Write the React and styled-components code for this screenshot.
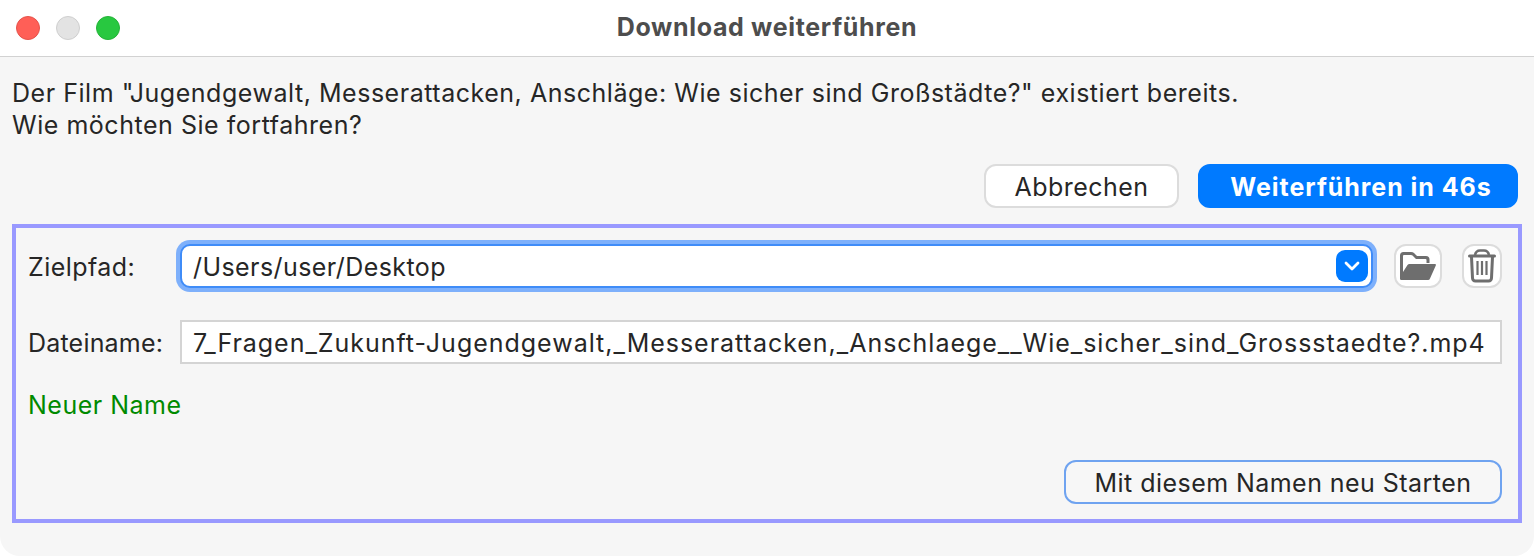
import React from "react";
import styled, { createGlobalStyle } from "styled-components";

const GlobalStyle = createGlobalStyle`
  html, body {
    margin: 0;
    padding: 0;
    background: #ffffff;
  }
  body {
    font-family: "Inter", "Liberation Sans", sans-serif;
    color: #262626;
  }
`;

const Window = styled.div`
  width: 1534px;
  height: 556px;
  display: flex;
  flex-direction: column;
  background: #f6f6f6;
  border-radius: 0 0 20px 20px;
  overflow: hidden;
`;

const TitleBar = styled.header`
  position: relative;
  height: 56px;
  flex: none;
  display: flex;
  align-items: center;
  justify-content: center;
  background: #ffffff;
  border-bottom: 1px solid #d2d2d2;
`;

const Lights = styled.div`
  position: absolute;
  left: 16px;
  top: 16px;
  display: flex;
  gap: 16px;
`;

const Light = styled.span`
  width: 24px;
  height: 24px;
  box-sizing: border-box;
  border-radius: 50%;
  background: ${(p) => p.$color};
  border: 1px solid ${(p) => p.$edge};
`;

const Title = styled.h1`
  margin: 0 0 2px;
  font-size: 25px;
  font-weight: 700;
  letter-spacing: 0.67px;
  color: #4d4d4d;
`;

const Body = styled.main`
  flex: 1;
  display: flex;
  flex-direction: column;
  padding: 20px 12px 0;
`;

const Message = styled.p`
  margin: 0;
  font-size: 25px;
  line-height: 32px;
  letter-spacing: 0.53px;
  color: #262626;
`;

const Actions = styled.div`
  display: flex;
  justify-content: flex-end;
  gap: 19px;
  margin-top: 23px;
  padding-right: 4px;
`;

const Button = styled.button`
  height: 44px;
  box-sizing: border-box;
  width: ${(p) => p.$width}px;
  padding: 2px 0 0;
  font-family: inherit;
  font-size: 25px;
  letter-spacing: 0.45px;
  border-radius: 12px;
  color: #262626;
  background: #ffffff;
  border: 2px solid #dcdcdc;
`;

const PrimaryButton = styled(Button)`
  padding-left: 6px;
  font-weight: 700;
  letter-spacing: 0.95px;
  color: #ffffff;
  background: #007aff;
  border-color: #007aff;
`;

const OutlineButton = styled(Button)`
  background: #f7f7f7;
  border-color: #6fa3f0;
`;

const Panel = styled.section`
  box-sizing: border-box;
  width: 1510px;
  height: 299px;
  margin-top: 16px;
  padding: 13px 16px 15px 12px;
  display: flex;
  flex-direction: column;
  border: 4px solid #9999ff;
`;

const Row = styled.div`
  display: flex;
  align-items: center;
  height: ${(p) => p.$height}px;
  margin-top: ${(p) => p.$top || 0}px;
`;

const Label = styled.label`
  width: 152px;
  flex: none;
  padding-top: 2px;
  font-size: 25px;
  letter-spacing: ${(p) => p.$spacing}px;
  color: #262626;
`;

const Select = styled.div`
  box-sizing: border-box;
  width: 1193px;
  height: 44px;
  display: flex;
  align-items: center;
  justify-content: space-between;
  padding: 0 3px 0 11px;
  background: #ffffff;
  border: 2px solid #3f8cf8;
  border-radius: 10px;
  box-shadow: 0 0 0 4px #7eb0fb;
  font-size: 25px;
  letter-spacing: 0.42px;
  color: #262626;
`;

const SelectValue = styled.span`
  padding-top: 2px;
`;

const SelectArrow = styled.span`
  width: 32px;
  height: 32px;
  display: flex;
  align-items: center;
  justify-content: center;
  border-radius: 9px;
  background: #007aff;
`;

const IconButton = styled.button`
  box-sizing: border-box;
  width: ${(p) => p.$width}px;
  height: 44px;
  margin-left: ${(p) => p.$left}px;
  padding: 0;
  display: flex;
  align-items: center;
  justify-content: center;
  background: #ffffff;
  border: 2px solid #dcdcdc;
  border-radius: 12px;
`;

const FileInput = styled.div`
  box-sizing: border-box;
  width: 1322px;
  height: 44px;
  display: flex;
  align-items: center;
  padding: 2px 0 0 11px;
  background: #ffffff;
  border: 2px solid #d4d4d4;
  font-size: 25px;
  letter-spacing: 0.98px;
  white-space: nowrap;
  overflow: hidden;
  color: #262626;
`;

const Status = styled.div`
  margin-top: 26px;
  font-size: 25px;
  line-height: 30px;
  letter-spacing: 0.5px;
  color: #008a00;
`;

const Footer = styled.div`
  margin-top: auto;
  display: flex;
  justify-content: flex-end;
`;

function FolderIcon() {
  return (
    <svg width="36" height="28" viewBox="0 0 36 28" fill="#6e6e6e">
      <path d="M0 27V3.5Q0 0 3.5 0H11Q13 0 14 1L17 4H26Q29.5 4 29.5 7.5V11H26.5V8Q26.5 7 25.5 7H16L12.5 3.5Q12 3 11 3H4Q3 3 3 4V20L7.5 13Q8.2 12 9.5 12H35Q36.3 12 35.8 13.5L30 26.5Q29.5 28 28 28H1.5Q0 28 0 27Z" />
    </svg>
  );
}

function TrashIcon() {
  return (
    <svg width="28" height="34" viewBox="0 0 28 34" fill="none" stroke="#6e6e6e">
      <path d="M1.5 7h25" strokeWidth="3" strokeLinecap="round" />
      <path d="M7 6Q8 1.5 12 1.5H16Q20 1.5 21 6" strokeWidth="2.6" />
      <path d="M3.5 8L4.5 29Q4.7 32 7.5 32H20.5Q23.3 32 23.5 29L24.5 8" strokeWidth="3" />
      <path d="M9.5 12V26M14 12V26M18.5 12V26" strokeWidth="2.2" />
    </svg>
  );
}

export default function App() {
  return (
    <>
      <GlobalStyle />
      <Window>
        <TitleBar>
          <Lights>
            <Light $color="#ff5f57" $edge="#e5534b" />
            <Light $color="#e3e3e3" $edge="#cfcfcf" />
            <Light $color="#28c840" $edge="#24b338" />
          </Lights>
          <Title>Download weiterführen</Title>
        </TitleBar>
        <Body>
          <Message>
            Der Film "Jugendgewalt, Messerattacken, Anschläge: Wie sicher sind Großstädte?" existiert bereits.
            <br />
            Wie möchten Sie fortfahren?
          </Message>
          <Actions>
            <Button $width={195}>Abbrechen</Button>
            <PrimaryButton $width={320}>Weiterführen in 46s</PrimaryButton>
          </Actions>
          <Panel>
            <Row $height={50}>
              <Label $spacing={0.45}>Zielpfad:</Label>
              <Select>
                <SelectValue>/Users/user/Desktop</SelectValue>
                <SelectArrow>
                  <svg width="16" height="10" viewBox="0 0 16 10" fill="none">
                    <path d="M2 2l6 6 6-6" stroke="#ffffff" strokeWidth="2.8" strokeLinecap="round" strokeLinejoin="round" />
                  </svg>
                </SelectArrow>
              </Select>
              <IconButton $width={48} $left={21}>
                <FolderIcon />
              </IconButton>
              <IconButton $width={40} $left={20}>
                <TrashIcon />
              </IconButton>
            </Row>
            <Row $height={44} $top={29}>
              <Label $spacing={0.2}>Dateiname:</Label>
              <FileInput>7_Fragen_Zukunft-Jugendgewalt,_Messerattacken,_Anschlaege__Wie_sicher_sind_Grossstaedte?.mp4</FileInput>
            </Row>
            <Status>Neuer Name</Status>
            <Footer>
              <OutlineButton $width={438}>Mit diesem Namen neu Starten</OutlineButton>
            </Footer>
          </Panel>
        </Body>
      </Window>
    </>
  );
}
